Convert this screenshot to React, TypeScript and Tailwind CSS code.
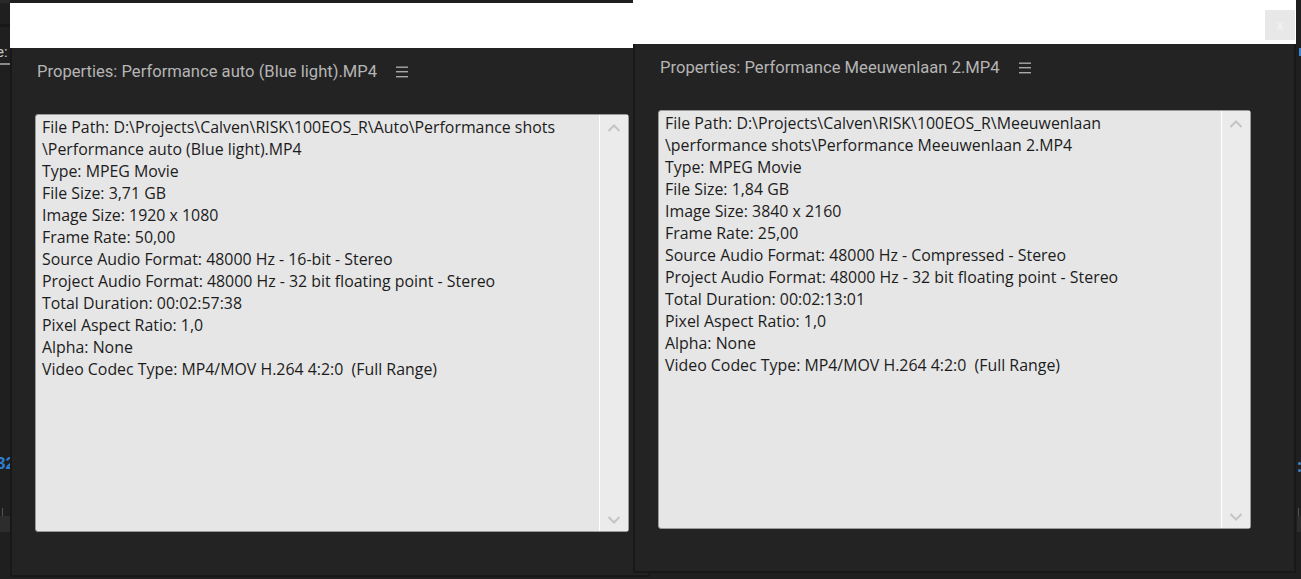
import React from "react";

const leftLines = [
  "File Path: D:\\Projects\\Calven\\RISK\\100EOS_R\\Auto\\Performance shots",
  "\\Performance auto (Blue light).MP4",
  "Type: MPEG Movie",
  "File Size: 3,71 GB",
  "Image Size: 1920 x 1080",
  "Frame Rate: 50,00",
  "Source Audio Format: 48000 Hz - 16-bit - Stereo",
  "Project Audio Format: 48000 Hz - 32 bit floating point - Stereo",
  "Total Duration: 00:02:57:38",
  "Pixel Aspect Ratio: 1,0",
  "Alpha: None",
  "Video Codec Type: MP4/MOV H.264 4:2:0  (Full Range)",
];

const rightLines = [
  "File Path: D:\\Projects\\Calven\\RISK\\100EOS_R\\Meeuwenlaan",
  "\\performance shots\\Performance Meeuwenlaan 2.MP4",
  "Type: MPEG Movie",
  "File Size: 1,84 GB",
  "Image Size: 3840 x 2160",
  "Frame Rate: 25,00",
  "Source Audio Format: 48000 Hz - Compressed - Stereo",
  "Project Audio Format: 48000 Hz - 32 bit floating point - Stereo",
  "Total Duration: 00:02:13:01",
  "Pixel Aspect Ratio: 1,0",
  "Alpha: None",
  "Video Codec Type: MP4/MOV H.264 4:2:0  (Full Range)",
];

function Hamburger() {
  return (
    <svg width="14" height="14" viewBox="0 0 14 14" className="ml-[18px]">
      <rect x="1" y="1.5" width="12" height="1.4" fill="#a8a8a8" />
      <rect x="1" y="6" width="12" height="1.4" fill="#a8a8a8" />
      <rect x="1" y="11" width="12" height="1.4" fill="#a8a8a8" />
    </svg>
  );
}

function Chevron({ up }: { up?: boolean }) {
  return (
    <svg width="14" height="10" viewBox="0 0 14 10">
      <path
        d={up ? "M1.5 8 L7 2.5 L12.5 8" : "M1.5 2 L7 7.5 L12.5 2"}
        fill="none"
        stroke="#c4c4c4"
        strokeWidth="2"
      />
    </svg>
  );
}

function InfoBox({ lines, size }: { lines: string[]; size: string }) {
  return (
    <div className={`flex ${size} rounded-[3px] border border-[#9a9a9a] bg-[#e6e6e6]`}>
      <div className="flex-1 pl-[6px] pt-[1px] text-[15.9px] leading-[22px] text-[#1c1c1c] whitespace-pre [font-family:'Open_Sans',sans-serif]">
        {lines.map((l, i) => (
          <div key={i}>{l}</div>
        ))}
      </div>
      <div className="flex w-[29px] flex-col items-center justify-between border-l border-l-white bg-[#ebebeb] pt-[8px] pb-[6px]">
        <Chevron up />
        <Chevron />
      </div>
    </div>
  );
}

function PropWindow({
  title,
  lines,
  header,
  boxSize,
  close,
}: {
  title: string;
  lines: string[];
  header: string;
  boxSize: string;
  close?: boolean;
}) {
  return (
    <div className="flex h-full w-full flex-col">
      <div className={`flex ${header} items-start justify-end bg-white pr-[1px] pt-[10px]`}>
        {close && (
          <div className="flex h-[30px] w-[30px] items-center justify-center bg-[#e8e8e8] text-[14px] text-[#f4f4f4] [font-family:'Liberation_Sans',sans-serif]">
            x
          </div>
        )}
      </div>
      <div className="flex flex-1 flex-col border-x-2 border-b-2 border-[#181818] bg-[#232323] pl-[23px]">
        <div className="flex h-[46px] items-center pl-[2px] pt-[2px] text-[16.6px] text-[#b5b5b5] [font-family:'Roboto',sans-serif]">
          <span>{title}</span>
          <Hamburger />
        </div>
        <div className="mt-[20px]">
          <InfoBox lines={lines} size={boxSize} />
        </div>
      </div>
    </div>
  );
}

function LeftStrip() {
  return (
    <div className="flex h-full w-[10px] flex-col overflow-hidden">
      <div className="h-[3px] bg-[#2a2a2a]" />
      <div className="h-[21px]" />
      <div className="h-[3px] bg-[#181818]" />
      <div className="h-[14px]" />
      <div className="h-[22px] -ml-[4px] text-[15px] leading-[22px] text-[#c8c8c8] [font-family:'Roboto',sans-serif]">
        e:
      </div>
      <div className="h-[2px] bg-[#8a8a8a]" />
      <div className="h-[387px]" />
      <div className="-ml-[4px] h-[24px] text-[17px] font-bold leading-[24px] text-[#2f7fd0] [font-family:'Liberation_Sans',sans-serif]">
        32
      </div>
      <div className="h-[32px]" />
      <div className="ml-[2px] h-[8px] w-px bg-[#555]" />
      <div className="h-[16px] bg-[#2d2d2d]" />
    </div>
  );
}

function RightStrip() {
  return (
    <div className="flex h-full w-[5px] flex-col items-end overflow-hidden">
      <div className="h-[48px]" />
      <div className="h-[8px] w-[2px] bg-[#3a84d0]" />
      <div className="h-[406px]" />
      <div className="flex flex-col gap-[4px]">
        <div className="h-[3px] w-[3px] rounded-full bg-[#3a84d0]" />
        <div className="h-[3px] w-[3px] rounded-full bg-[#3a84d0]" />
      </div>
      <div className="h-[36px]" />
      <div className="mr-[2px] h-[8px] w-px bg-[#555]" />
      <div className="h-[16px] w-[4px] bg-[#2d2d2d]" />
    </div>
  );
}

export default function App() {
  return (
    <div className="relative flex h-[579px] w-[1301px] justify-between overflow-hidden bg-[#1f1f1f]">
      <LeftStrip />
      <RightStrip />

      {/* left window */}
      <div className="absolute left-[10px] top-[3px] h-[574px] w-[640px]">
        <PropWindow
          title="Properties: Performance auto (Blue light).MP4"
          lines={leftLines}
          header="h-[45px]"
          boxSize="h-[418px] w-[594px]"
        />
      </div>

      {/* right window */}
      <div className="absolute left-[633px] top-0 h-[573px] w-[663px]">
        <PropWindow
          title="Properties: Performance Meeuwenlaan 2.MP4"
          lines={rightLines}
          header="h-[44px]"
          boxSize="h-[419px] w-[593px]"
          close
        />
      </div>
    </div>
  );
}
